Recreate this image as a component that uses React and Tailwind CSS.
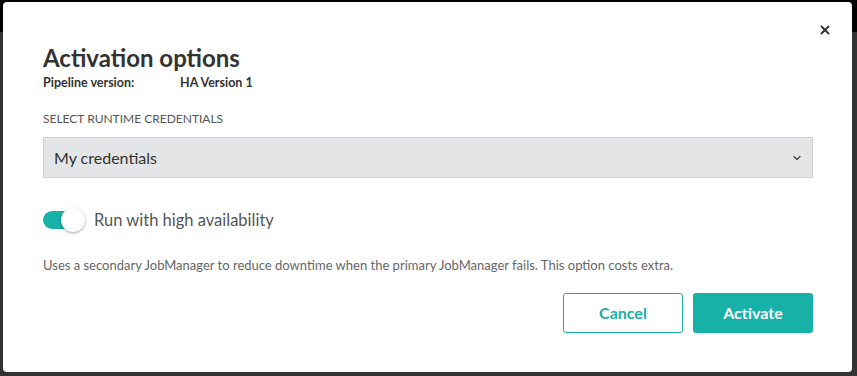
import { ChevronDown, X } from 'lucide-react';

export default function App() {
    return (
        <div className="w-[857px] h-[376px] bg-[linear-gradient(#000_32px,#333_32px)] pt-[2px] pl-[3px] pr-[5px] pb-[4px] font-['Lato',sans-serif] overflow-hidden">
            {/* Modal */}
            <div className="relative h-full bg-white rounded-[4px] pl-[40px] pr-[39px] pt-[41px]">
                <button className="absolute right-[20px] top-[21px] text-[#333]">
                    <X className="w-[14px] h-[14px]" strokeWidth={3.2} />
                </button>

                <h2 className="text-[24px] leading-[30px] font-bold text-[#333]">Activation options</h2>
                <div className="flex text-[12.5px] leading-[16px] font-bold text-[#333] mt-[2px]">
                    <span className="w-[137px]">Pipeline version:</span>
                    <span>HA Version 1</span>
                </div>

                <div className="mt-[20px] text-[12px] leading-[16px] text-[#555] uppercase">
                    Select runtime credentials
                </div>
                <div className="mt-[10px] h-[41px] bg-[#e4e5e7] border border-[#cfd0d2] flex items-center justify-between pl-[10px] pr-[9px]">
                    <span className="text-[16px] text-[#333]">My credentials</span>
                    <ChevronDown className="w-[12px] h-[12px] text-[#444]" strokeWidth={2.5} />
                </div>

                <div className="mt-[30px] flex items-center gap-[9px]">
                    <div className="relative w-[42px] h-[24px] flex items-center">
                        <div className="w-[40px] h-[18px] rounded-full bg-[#17b1a7]" />
                        <div className="absolute right-0 top-0 w-[24px] h-[24px] rounded-full bg-white shadow-[0_1px_3px_rgba(0,0,0,0.35)]" />
                    </div>
                    <span className="text-[16.5px] text-[#555]">Run with high availability</span>
                </div>

                <p className="mt-[24px] text-[13px] leading-[16px] text-[#666]">
                    Uses a secondary JobManager to reduce downtime when the primary JobManager fails. This option costs extra.
                </p>

                <div className="mt-[20px] flex justify-end gap-[10px]">
                    <button className="w-[120px] h-[40px] rounded-[3px] border border-[#17b1a7] text-[#17b1a7] text-[16px] font-bold bg-white">
                        Cancel
                    </button>
                    <button className="w-[120px] h-[40px] rounded-[3px] bg-[#17b1a7] text-white text-[16px] font-bold">
                        Activate
                    </button>
                </div>
            </div>
        </div>
    );
}
